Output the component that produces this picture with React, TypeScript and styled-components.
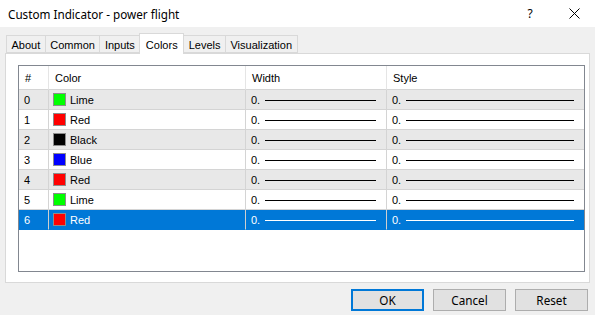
import React from 'react';
import styled, { createGlobalStyle } from 'styled-components';

const GlobalStyle = createGlobalStyle`
    html, body {
        margin: 0;
        padding: 0;
        background: #f0f0f0;
    }
    * {
        box-sizing: border-box;
    }
`;

const Window = styled.div`
    width: 595px;
    height: 315px;
    background: #f0f0f0;
    font-family: 'Liberation Sans', Arial, sans-serif;
    font-size: 11px;
    color: #000;
    display: flex;
    flex-direction: column;
    overflow: hidden;
`;

const TitleBar = styled.div`
    height: 27px;
    background: #fff;
    display: flex;
    align-items: center;
    padding-left: 8px;
    font-family: 'Noto Sans', 'Open Sans', sans-serif;
    font-size: 11.7px;
`;

const Title = styled.div`
    flex: 1;
`;

const TitleButton = styled.div<{ $w: number }>`
    width: ${(p) => p.$w}px;
    height: 27px;
    display: flex;
    align-items: center;
    justify-content: center;
    font-size: 12px;
`;

const Body = styled.div`
    padding: 8px 5px 0 5px;
`;

const TabsRow = styled.div`
    display: flex;
    height: 18px;
    padding-left: 2px;
    align-items: flex-end;
`;

const Tab = styled.div<{ $active?: boolean }>`
    height: ${(p) => (p.$active ? 21 : 18)}px;
    margin-bottom: ${(p) => (p.$active ? -1 : 0)}px;
    padding: 0 ${(p) => (p.$active ? 5.5 : 4.5)}px;
    padding-top: ${(p) => (p.$active ? 1 : 2)}px;
    margin-left: -1px;
    background: ${(p) => (p.$active ? '#fff' : '#f0f0f0')};
    border: 1px solid #d9d9d9;
    border-bottom: ${(p) => (p.$active ? 'none' : '1px solid #d9d9d9')};
    position: relative;
    z-index: ${(p) => (p.$active ? 2 : 1)};
    display: flex;
    align-items: center;
`;

const Panel = styled.div`
    height: 230px;
    background: #fff;
    border: 1px solid #d9d9d9;
    padding: 11px 4px 0 12px;
`;

const List = styled.div`
    height: 207px;
    border: 1px solid #828790;
    background: #fff;
`;

const Row = styled.div<{ $bg: string; $header?: boolean; $selected?: boolean }>`
    display: grid;
    grid-template-columns: 30px 197px 141px 1fr;
    height: ${(p) => (p.$header ? 24 : 20)}px;
    background: ${(p) => p.$bg};
    color: ${(p) => (p.$selected ? '#fff' : '#000')};
`;

const Cell = styled.div<{ $header?: boolean; $selected?: boolean; $last?: boolean }>`
    display: flex;
    align-items: center;
    padding-left: ${(p) => (p.$header ? 6 : 5)}px;
    border-right: ${(p) =>
        p.$last ? 'none' : `1px solid ${p.$header ? '#e5e5e5' : p.$selected ? '#cfcfcf' : '#d4d4d4'}`};
    border-bottom: 1px solid ${(p) => (p.$selected ? '#0078d7' : '#d4d4d4')};
    white-space: nowrap;
`;

const Swatch = styled.span<{ $color: string }>`
    width: 13px;
    height: 13px;
    background: ${(p) => p.$color};
    border: 1px solid #8c8c8c;
    margin-left: -1px;
    margin-right: 4px;
`;

const Line = styled.span<{ $selected?: boolean }>`
    flex: 1;
    height: 1px;
    margin: 1px 10px 0 5px;
    background: ${(p) => (p.$selected ? '#fff' : '#000')};
`;

const Footer = styled.div`
    display: flex;
    justify-content: flex-end;
    gap: 9px;
    padding: 6px 2px 0 0;
`;

const Button = styled.div<{ $default?: boolean }>`
    width: 73px;
    height: 22px;
    display: flex;
    align-items: center;
    justify-content: center;
    background: #e1e1e1;
    border: ${(p) => (p.$default ? '2px solid #0078d7' : '1px solid #adadad')};
    font-family: 'Noto Sans', 'Open Sans', sans-serif;
    font-size: 11.7px;
`;

const rows = [
    { name: 'Lime', color: '#00ff00' },
    { name: 'Red', color: '#ff0000' },
    { name: 'Black', color: '#000000' },
    { name: 'Blue', color: '#0000ff' },
    { name: 'Red', color: '#ff0000' },
    { name: 'Lime', color: '#00ff00' },
    { name: 'Red', color: '#ff0000' },
];

const tabs = ['About', 'Common', 'Inputs', 'Colors', 'Levels', 'Visualization'];

const App: React.FC = () => {
    const selected = 6;

    return (
        <Window>
            <GlobalStyle />
            <TitleBar>
                <Title>Custom Indicator - power flight</Title>
                <TitleButton $w={46}>?</TitleButton>
                <TitleButton $w={42}>
                    <svg width="11" height="11" viewBox="0 0 11 11">
                        <path d="M0.5 0.5 L10.5 10.5 M10.5 0.5 L0.5 10.5" stroke="#000" strokeWidth="1" />
                    </svg>
                </TitleButton>
            </TitleBar>
            <Body>
                <TabsRow>
                    {tabs.map((t) => (
                        <Tab key={t} $active={t === 'Colors'}>
                            {t}
                        </Tab>
                    ))}
                </TabsRow>
                <Panel>
                    <List>
                        <Row $bg="#fff" $header>
                            <Cell $header>#</Cell>
                            <Cell $header>Color</Cell>
                            <Cell $header>Width</Cell>
                            <Cell $header $last>Style</Cell>
                        </Row>
                        {rows.map((r, i) => {
                            const sel = i === selected;
                            const bg = sel ? '#0078d7' : i % 2 === 0 ? '#e8e8e8' : '#fff';
                            return (
                                <Row key={i} $bg={bg} $selected={sel}>
                                    <Cell $selected={sel}>{i}</Cell>
                                    <Cell $selected={sel}>
                                        <Swatch $color={r.color} />
                                        {r.name}
                                    </Cell>
                                    <Cell $selected={sel}>
                                        0.
                                        <Line $selected={sel} />
                                    </Cell>
                                    <Cell $selected={sel} $last>
                                        0.
                                        <Line $selected={sel} />
                                    </Cell>
                                </Row>
                            );
                        })}
                    </List>
                </Panel>
                <Footer>
                    <Button $default>OK</Button>
                    <Button>Cancel</Button>
                    <Button>Reset</Button>
                </Footer>
            </Body>
        </Window>
    );
};

export default App;
